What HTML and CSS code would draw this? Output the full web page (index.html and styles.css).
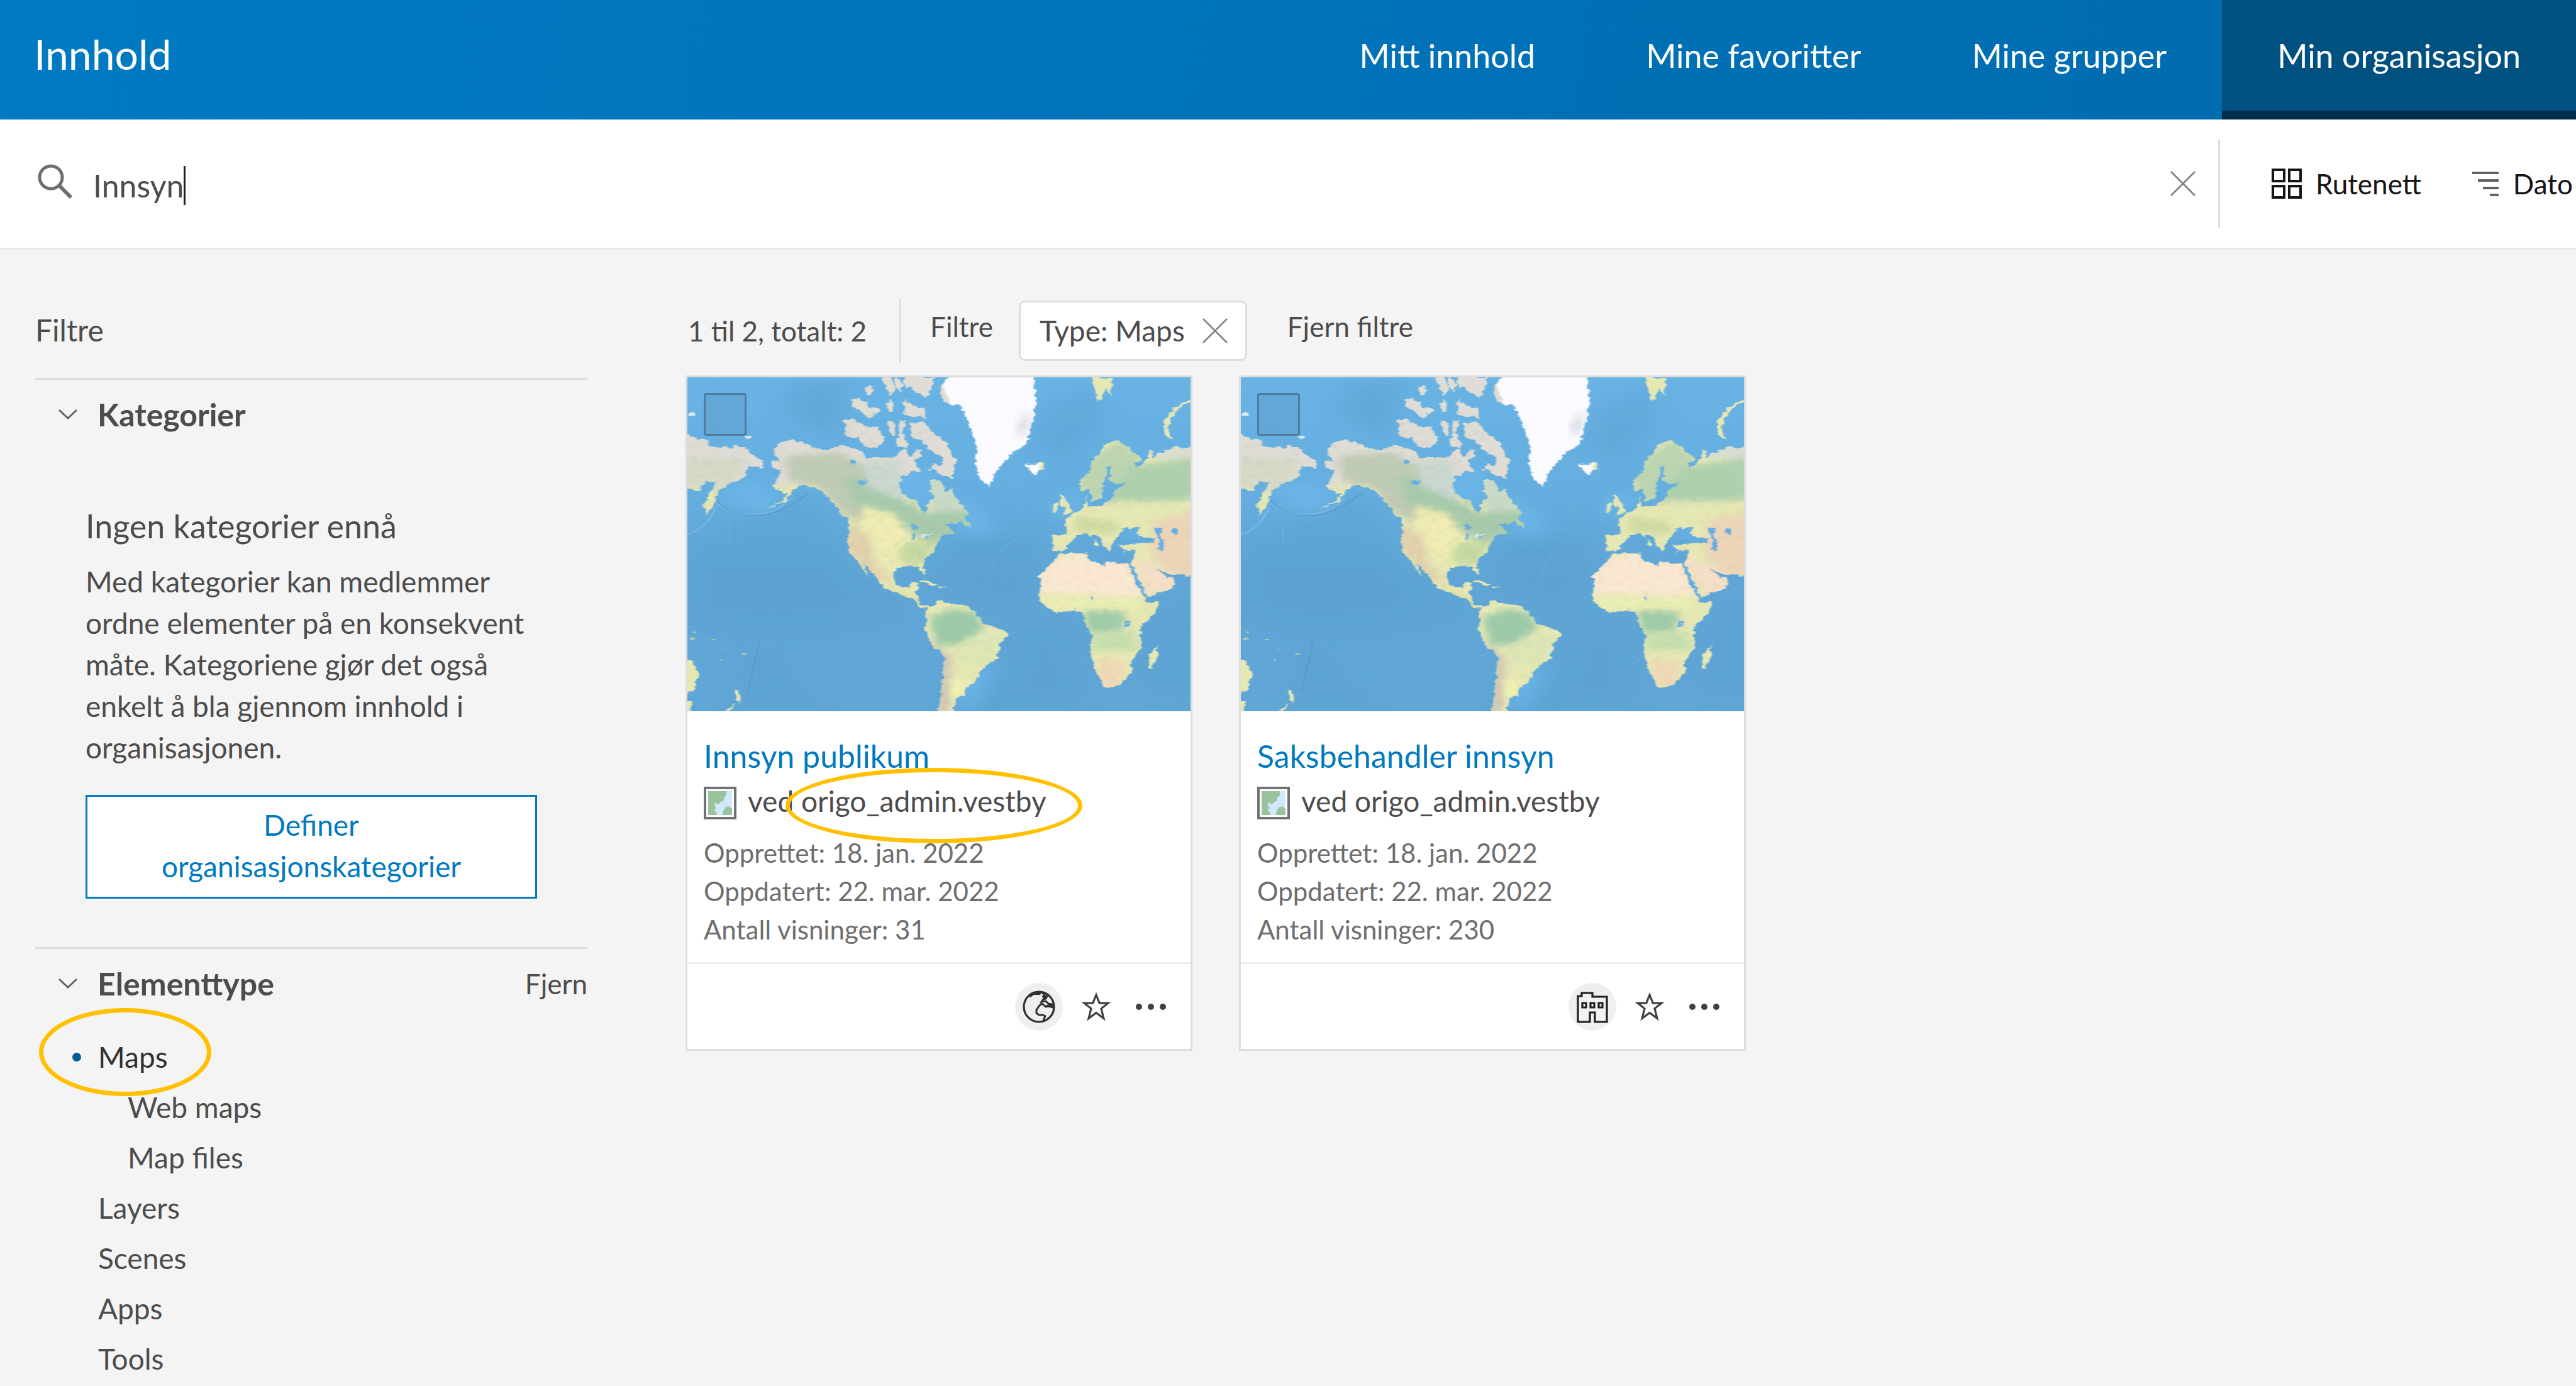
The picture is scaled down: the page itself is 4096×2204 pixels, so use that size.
FILE: index.html
```html
<!DOCTYPE html>
<html lang="no">
<head>
<meta charset="utf-8">
<title>Innhold</title>
<link rel="stylesheet" href="styles.css">
</head>
<body>
<svg class="sprite" aria-hidden="true">
  <defs>
    <linearGradient id="ocean" x1="0" y1="0" x2="0" y2="1">
      <stop offset="0" stop-color="#69b3e5"/>
      <stop offset="0.35" stop-color="#65aedf"/>
      <stop offset="0.6" stop-color="#5fa5d5"/>
      <stop offset="1" stop-color="#60a6d6"/>
    </linearGradient>
    <filter id="soft" x="-20%" y="-20%" width="140%" height="140%"><feGaussianBlur stdDeviation="13"/></filter>
    <filter id="haze" x="-20%" y="-20%" width="140%" height="140%"><feGaussianBlur stdDeviation="32"/></filter>
    <filter id="coast" x="0" y="0" width="100%" height="100%">
      <feTurbulence type="fractalNoise" baseFrequency="0.05" numOctaves="3" seed="4" result="n"/>
      <feDisplacementMap in="SourceGraphic" in2="n" scale="22" xChannelSelector="R" yChannelSelector="G" result="d"/>
      <feGaussianBlur in="d" stdDeviation="1.6"/>
    </filter>
    <filter id="relief" x="0" y="0" width="100%" height="100%">
      <feTurbulence type="fractalNoise" baseFrequency="0.04" numOctaves="4" seed="9"/>
      <feColorMatrix values="0 0 0 0 0.5  0 0 0 0 0.47  0 0 0 0 0.4  1.6 0 0 0 -0.72"/>
    </filter>
    <clipPath id="land">
      <path d="M0 270L22 285 50 310 85 315 92 345 145 345 150 360 160 342 195 345 220 385 250 410 250 445 230 430 205 435 192 485 150 515 125 530 108 560 110 595 80 655 72 600 90 560 110 505 75 500 60 545 0 530Z"/>
      <path d="M280 370L300 330 335 312 400 345 440 360 490 340 550 365 560 395 610 390 650 395 670 360 690 345 690 390 705 385 715 360 732 360 725 390 710 410 718 440 735 465 700 455 690 460 670 490 665 530 680 570 720 600 735 640 748 655 750 600 765 580 755 490 790 500 805 550 822 535 840 590 870 635 862 665 885 710 860 700 855 680 830 690 800 700 815 715 840 740 800 745 775 790 768 820 740 860 735 880 745 925 735 925 722 888 690 885 655 895 645 930 655 975 690 985 700 960 725 965 715 1000 720 1030 730 1065 760 1075 735 1080 700 1035 650 1005 615 985 590 930 550 870 560 900 580 945 565 925 545 880 515 820 505 760 515 690 490 650 450 575 420 540 375 515 340 545 320 590 250 640 300 600 325 560 280 525 290 490 310 455 280 440 275 415 305 415Z"/>
      <path d="M500 220L525 215 550 250 600 260 620 300 600 350 560 345 540 300 515 305 500 280ZM525 125L545 125 580 170 605 180 570 215 545 180 520 160ZM560 70L580 65 580 110 565 110ZM610 30L640 30 650 80 640 110 625 80ZM655 30L675 60 665 90 650 70ZM680 30L770 30 765 80 740 120 715 100 700 70 680 80ZM625 150L640 130 650 180 630 185ZM680 130L710 160 740 170 745 215 710 210 680 200ZM630 230L650 240 650 300 635 280ZM665 225L682 225 675 280 690 340 660 345 650 330 665 290ZM695 235L740 235 765 280 800 320 820 370 838 410 828 440 825 490 790 470 760 450 765 420 790 430 800 405 760 360 730 320 705 300Z"/>
      <path d="M745 1075L760 1075 785 1040 830 1060 860 1065 890 1090 915 1145 985 1180 990 1205 968 1240 960 1310 915 1350 890 1420 865 1440 862 1475 835 1490 825 1560 778 1560 792 1470 800 1300 765 1250 740 1185 745 1140Z"/>
      <path d="M820 10L1072 10 1078 130 1070 230 1050 330 1000 380 960 450 935 525 910 490 893 420 900 350 880 260 850 160 800 145 785 80ZM1050 420L1070 425 1100 415 1102 440 1075 472 1058 450Z"/>
      <path d="M1570 350L1500 345 1450 375 1430 400 1430 365 1422 360 1412 410 1385 440 1375 420 1398 405 1360 350 1325 315 1285 340 1250 410 1240 460 1210 500 1215 550 1240 535 1250 595 1275 575 1283 510 1295 470 1290 440 1308 425 1300 500 1320 515 1360 505 1320 540 1305 590 1280 610 1235 618 1228 568 1222 625 1190 650 1163 690 1172 740 1130 750 1128 810 1150 825 1175 795 1200 745 1235 740 1270 790 1262 800 1245 745 1265 745 1290 815 1305 820 1310 770 1330 750 1340 715 1385 745 1400 755 1440 760 1435 780 1330 790 1345 820 1380 815 1365 870 1395 960 1418 1030 1490 985 1500 945 1470 935 1445 890 1480 925 1570 935Z"/>
      <path d="M1140 850L1150 835 1230 825 1240 860 1285 885 1290 865 1360 880 1375 950 1415 1050 1455 1045 1440 1100 1395 1165 1395 1270 1365 1320 1365 1370 1330 1430 1285 1440 1255 1350 1243 1280 1250 1200 1230 1160 1220 1100 1195 1085 1140 1100 1095 1055 1087 1010 1090 930ZM1445 1245L1448 1290 1432 1355 1418 1350 1422 1290ZM1155 555L1170 590 1188 645 1160 655 1165 625 1150 600ZM1130 610L1145 595 1147 630 1130 645Z"/>
      <path d="M1245 30L1310 30 1305 120 1290 80 1270 145 1255 90ZM1570 125L1515 165 1490 210 1478 260 1490 315 1465 290 1470 220 1500 165 1540 135ZM0 1290L40 1320 58 1380 40 1450 0 1480ZM0 1500L35 1500 30 1546 0 1546ZM165 1440L188 1480 180 1510 168 1480ZM172 1505L150 1546 135 1546ZM735 945L780 975 765 978 730 955ZM785 975L812 985 785 990Z"/>
    </clipPath>
    <symbol id="worldmap" viewBox="22 30 1524 1516" preserveAspectRatio="none">
      <rect x="0" y="0" width="1570" height="1570" fill="url(#ocean)"/>
      <g filter="url(#haze)" fill="#5a9fcf">
        <path d="M340 60L520 40 480 280 400 270 330 200Z" opacity="0.45"/>
        <path d="M1100 180L1260 60 1280 250 1160 420 1080 340Z" opacity="0.35"/>
        <path d="M22 780L200 680 400 560 520 900 640 1080 500 1150 240 1180 22 1120Z" opacity="0.4"/>
        <path d="M800 800L1080 740 1060 1000 960 1060 830 950Z" opacity="0.5"/>
        <path d="M1000 1120L1200 1200 1220 1500 900 1560 1020 1300Z" opacity="0.4"/>
        <path d="M1420 1200L1560 1080 1560 1500 1420 1450Z" opacity="0.4"/>
        <path d="M230 1250L420 1540 180 1560Z" opacity="0.4"/>
      </g>
      <g filter="url(#haze)" fill="#6cb6e8">
        <path d="M110 520L280 520 300 620 200 640Z"/>
        <path d="M650 440L760 440 760 640 680 600Z"/>
        <path d="M830 560L900 620 960 700 900 760 840 700Z"/>
        <path d="M1200 560L1240 600 1160 680 1110 600Z"/>
        <path d="M880 1360L960 1340 880 1540 830 1540Z"/>
      </g>
      <g fill="none" stroke="#8cc3e6" stroke-width="5" opacity="0.6">
        <path d="M110 600C150 650 200 660 250 648S310 610 340 575"/>
        <path d="M22 745C60 725 90 680 108 620"/>
        <path d="M148 690L150 780M930 940C950 860 960 820 1020 760M700 1340L770 1280M1160 1380L1240 1300" stroke-width="3" opacity="0.5"/>
      </g>
      <path d="M240 1230C225 1330 215 1400 205 1460M110 590C150 655 230 680 300 635S360 580 390 555" fill="none" stroke="#5595c2" stroke-width="5" opacity="0.6"/>
      <g filter="url(#coast)">
        <g clip-path="url(#land)">
          <rect x="0" y="0" width="1570" height="1570" fill="#e6e8b4"/>
          <g filter="url(#soft)">
            <rect x="0" y="0" width="880" height="520" fill="#dfddd6"/>
            <path d="M0 390L200 410 160 560 0 520Z" fill="#d6dac6"/>
            <path d="M320 390L480 370 570 440 580 700 500 660 420 530 330 500Z" fill="#bfcbb4"/>
            <path d="M500 480L580 490 660 550 740 650 880 620 880 740 760 780 690 730 620 640 530 620Z" fill="#a6cbaa"/>
            <path d="M560 410L660 400 690 600 560 520Z" fill="#cbd9d0"/>
            <path d="M750 480L830 520 860 640 760 640Z" fill="#c8dac8"/>
            <path d="M552 610L650 650 700 760 740 780 640 900 590 800 550 700Z" fill="#f0edb2"/>
            <path d="M500 700L570 740 590 880 640 960 590 950 500 800Z" fill="#e3d2ab"/>
            <path d="M670 780L780 770 740 880 660 870Z" fill="#c6dba2"/>
            <path d="M600 930L650 990 720 1050 740 1080 690 1050Z" fill="#d5d596"/>
            <path d="M755 1120L830 1080 900 1100 920 1180 880 1240 780 1250Z" fill="#9dcba9"/>
            <path d="M910 1180L990 1190 950 1330 850 1340 830 1260Z" fill="#dde7b6"/>
            <path d="M740 1180L780 1260 820 1300 810 1560 780 1560 790 1320Z" fill="#cdbfb6"/>
            <path d="M825 1380L870 1440 840 1490 815 1470Z" fill="#f3f3b0"/>
            <path d="M1210 440L1330 310 1400 400 1320 600 1210 590Z" fill="#bdd4b0"/>
            <path d="M1360 440L1570 390 1570 580 1480 590 1300 590 1310 520Z" fill="#aed0ac"/>
            <path d="M1430 330L1570 330 1570 400 1430 400Z" fill="#d9ddd0"/>
            <path d="M1200 660L1320 690 1330 740 1200 730Z" fill="#cfdba0"/>
            <path d="M1440 680L1570 630 1570 940 1480 930 1420 800Z" fill="#ecd5b8"/>
            <path d="M1360 830L1500 930 1490 1000 1420 1020Z" fill="#f6dfc8"/>
            <path d="M1080 860L1240 820 1360 870 1400 1020 1080 1010Z" fill="#fae8d2"/>
            <path d="M1080 1030L1380 1030 1400 1080 1100 1080Z" fill="#ecefb4"/>
            <path d="M1220 1090L1350 1090 1340 1180 1240 1190Z" fill="#9fcca8"/>
            <path d="M1245 1200L1380 1180 1380 1270 1250 1270Z" fill="#c6dfae"/>
            <path d="M1260 1310L1350 1320 1330 1450 1270 1430Z" fill="#f0d9b6"/>
          </g>
          <path d="M780 0H1090V540H900L880 400Z" fill="#fafaff"/>
          <path d="M1060 170L1050 260 1030 310 1020 250Z" fill="#c9ccd4" opacity="0.7" filter="url(#soft)"/>
          <rect x="0" y="200" width="780" height="800" filter="url(#relief)" opacity="0.3"/>
          <rect x="700" y="560" width="870" height="1010" filter="url(#relief)" opacity="0.2"/>
        </g>
        <g fill="#66aee0">
          <path d="M1345 712L1362 720 1390 708 1380 735 1402 755 1390 772 1360 765 1335 765Z"/>
          <path d="M1435 715L1462 712 1452 745 1468 790 1462 820 1448 812 1450 775Z"/>
          <path d="M1494 718L1508 715 1508 745 1494 745ZM515 405L535 405 530 430 515 425ZM540 500L565 500 560 515 545 515ZM1350 1135L1362 1135 1360 1160 1350 1158ZM1248 1022L1256 1022 1255 1034 1248 1034Z"/>
          <path d="M695 700L715 700 725 715 705 720ZM705 735L712 735 712 765 704 765ZM735 745L765 750 745 762Z"/>
          <path d="M1360 895L1372 900 1415 1020 1408 1028 1380 960Z"/>
        </g>
        <path d="M730 745L765 740 760 750 735 755Z" fill="#dcebf2"/>
        <g fill="#dcebf0"><circle cx="36" cy="196" r="9"/><circle cx="206" cy="302" r="9"/></g>
        <g fill="#b9d3a2"><circle cx="35" cy="1218" r="6"/><circle cx="45" cy="1186" r="5"/><circle cx="100" cy="1222" r="4"/><circle cx="133" cy="1266" r="4"/><circle cx="195" cy="1284" r="5"/><circle cx="126" cy="1315" r="4"/></g>
      </g>
    </symbol>
    <symbol id="i-star" viewBox="0 0 48 48"><path d="M24 5L29.200 18.200H43L32 26.800 36 42.500 24 33.500 12 42.500 16 26.800 5 18.200H18.800Z" fill="none" stroke="#404040" stroke-width="3.200"/></symbol>
    <symbol id="i-dots" viewBox="0 0 50 48"><g fill="#404040"><circle cx="6" cy="24" r="5"/><circle cx="25" cy="24" r="5"/><circle cx="44" cy="24" r="5"/></g></symbol>
    <symbol id="i-x" viewBox="0 0 40 40"><path d="M1 1L39 39M39 1L1 39" fill="none" stroke="#808080" stroke-width="2.600"/></symbol>
    <symbol id="i-chevron" viewBox="0 0 30 18"><path d="M1 2L15 15 29 2" fill="none" stroke="#606060" stroke-width="3"/></symbol>
    <symbol id="i-webmap" viewBox="0 0 52 52">
      <rect x="2" y="2" width="48" height="48" fill="#fff" stroke="#727276" stroke-width="4"/>
      <rect x="7" y="7" width="38" height="38" fill="#d0e8fa"/>
      <path d="M7 7H36V14L32 17V22L27 24 25 27 20 28V25L17 26V30L20 34 16 36 20 41 21 45H7Z" fill="#99c39c"/>
      <path d="M30 45V41L34 33 40 31 43 34 45 35V45Z" fill="#99c39c"/>
    </symbol>
  </defs>
</svg>

<header class="topbar">
  <h1 class="topbar-title">Innhold</h1>
  <nav class="tabs">
    <a class="tab" href="#mine">Mitt innhold</a>
    <a class="tab" href="#favoritter">Mine favoritter</a>
    <a class="tab" href="#grupper">Mine grupper</a>
    <a class="tab tab-active" href="#organisasjon" aria-current="page">Min organisasjon</a>
  </nav>
</header>

<div class="searchbar">
  <label class="search">
    <svg class="search-icon" viewBox="0 0 56 56" role="img" aria-label="Søk"><circle cx="21" cy="21" r="18" fill="none" stroke="#6e6e6e" stroke-width="5"/><path d="M34 34L53 53" stroke="#6e6e6e" stroke-width="6"/></svg>
    <input class="search-input" type="text" value="Innsyn">
    <span class="caret"></span>
  </label>
  <button class="icon-button clear" type="button" aria-label="Tøm"><svg class="x-icon"><use href="#i-x"/></svg></button>
  <div class="view-tools">
    <button class="tool" type="button"><svg class="tool-icon" viewBox="0 0 48 48"><path d="M2 2H20V20H2ZM28 2H46V20H28ZM2 28H20V46H2ZM28 28H46V46H28Z" fill="none" stroke="#151515" stroke-width="4"/></svg>Rutenett</button>
    <button class="tool" type="button"><svg class="sort-icon" viewBox="0 0 44 42"><path d="M1 4H43M10 16H43M18 28H43M29 39H43" fill="none" stroke="#606060" stroke-width="4"/></svg>Dato</button>
  </div>
</div>

<main class="page">
  <aside class="sidebar">
    <h2 class="sidebar-title">Filtre</h2>
    <section class="group">
      <div class="group-head"><svg class="chevron"><use href="#i-chevron"/></svg><h3 class="group-title">Kategorier</h3></div>
      <div class="empty">
        <h4 class="empty-title">Ingen kategorier ennå</h4>
        <p class="empty-text">Med kategorier kan medlemmer<br>ordne elementer på en konsekvent<br>måte. Kategoriene gjør det også<br>enkelt å bla gjennom innhold i<br>organisasjonen.</p>
        <button class="outline-button" type="button">Definer<br>organisasjonskategorier</button>
      </div>
    </section>
    <section class="group">
      <div class="group-head"><svg class="chevron"><use href="#i-chevron"/></svg><h3 class="group-title">Elementtype</h3><a class="remove" href="#fjern">Fjern</a></div>
      <ul class="types">
        <li class="type type-active"><a href="#maps">Maps</a><span class="ring ring-type"></span></li>
        <li class="type type-sub"><a href="#webmaps">Web maps</a></li>
        <li class="type type-sub"><a href="#mapfiles">Map files</a></li>
        <li class="type"><a href="#layers">Layers</a></li>
        <li class="type"><a href="#scenes">Scenes</a></li>
        <li class="type"><a href="#apps">Apps</a></li>
        <li class="type"><a href="#tools">Tools</a></li>
      </ul>
    </section>
  </aside>

  <section class="results">
    <div class="summary">
      <span class="count">1 til 2, totalt: 2</span>
      <span class="summary-label">Filtre</span>
      <button class="chip" type="button">Type: Maps<svg class="x-icon"><use href="#i-x"/></svg></button>
      <a class="clear-filters" href="#fjern-filtre">Fjern filtre</a>
    </div>
    <div class="cards">
      <article class="card">
        <div class="thumb"><svg class="thumb-map"><use href="#worldmap"/></svg><input class="pick" type="checkbox" aria-label="Velg Innsyn publikum"></div>
        <div class="card-body">
          <h3 class="card-title"><a href="#innsyn-publikum">Innsyn publikum</a></h3>
          <p class="owner"><svg class="owner-icon"><use href="#i-webmap"/></svg>ved origo_admin.vestby<span class="ring ring-owner"></span></p>
          <p class="meta">Opprettet: 18. jan. 2022</p>
          <p class="meta">Oppdatert: 22. mar. 2022</p>
          <p class="meta">Antall visninger: 31</p>
        </div>
        <footer class="card-foot">
          <span class="share"><svg class="share-icon" viewBox="0 0 52 52"><circle cx="26" cy="26" r="24" fill="none" stroke="#303030" stroke-width="3.200"/><path d="M12 8L20 3 31 3 28 7 18 7 11 12Z" fill="#303030"/><path d="M31 4L35 6 33 9 39 9 37 13 33 14 30 18 37 17 41 21 47 22 48 27 42 25 37 26 32 22 30 21 26 25 22 31 22 36 26 39 32 39 36 41 34 45 33 49" fill="none" stroke="#303030" stroke-width="3"/><path d="M32 6L39 9 37 14 32 13ZM37 23L46 22 48 26 40 27Z" fill="#303030"/></svg></span>
          <button class="icon-button foot-button" type="button" aria-label="Favoritt"><svg class="foot-icon"><use href="#i-star"/></svg></button>
          <button class="icon-button foot-button" type="button" aria-label="Mer"><svg class="foot-icon"><use href="#i-dots"/></svg></button>
        </footer>
      </article>
      <article class="card">
        <div class="thumb"><svg class="thumb-map"><use href="#worldmap"/></svg><input class="pick" type="checkbox" aria-label="Velg Saksbehandler innsyn"></div>
        <div class="card-body">
          <h3 class="card-title"><a href="#saksbehandler-innsyn">Saksbehandler innsyn</a></h3>
          <p class="owner"><svg class="owner-icon"><use href="#i-webmap"/></svg>ved origo_admin.vestby</p>
          <p class="meta">Opprettet: 18. jan. 2022</p>
          <p class="meta">Oppdatert: 22. mar. 2022</p>
          <p class="meta">Antall visninger: 230</p>
        </div>
        <footer class="card-foot">
          <span class="share"><svg class="share-icon" viewBox="0 0 52 52"><path d="M3 50V9H9V4H26V10H49V50H30V35H22V50Z" fill="#f3f3f3" stroke="#202020" stroke-width="3.200"/><path d="M10 20H16V27H10ZM23 20H29V27H23ZM36 20H42V27H36Z" fill="none" stroke="#202020" stroke-width="3.200"/></svg></span>
          <button class="icon-button foot-button" type="button" aria-label="Favoritt"><svg class="foot-icon"><use href="#i-star"/></svg></button>
          <button class="icon-button foot-button" type="button" aria-label="Mer"><svg class="foot-icon"><use href="#i-dots"/></svg></button>
        </footer>
      </article>
    </div>
  </section>
</main>
</body>
</html>
```
FILE: styles.css
```css
* { box-sizing: border-box; margin: 0; padding: 0; }

body {
  min-height: 100vh;
  overflow-x: hidden;
  background: #f4f4f4;
  color: #4c4c4c;
  font-family: Lato, "Open Sans", sans-serif;
  font-size: 46px;
  line-height: 66px;
}

a { color: inherit; text-decoration: none; }
button, input { font: inherit; color: inherit; border: 0; background: none; border-radius: 0; }
ul { list-style: none; }
svg { display: block; flex: none; }
.sprite { position: absolute; width: 0; height: 0; }

.topbar {
  display: flex;
  justify-content: space-between;
  height: 190px;
  padding-left: 54px;
  background: linear-gradient(100deg, #007ac2, #0074ba 40%, #006aae);
  color: #fff;
}
.topbar-title { font-size: 66px; font-weight: 400; line-height: 172px; }
.tabs { display: flex; font-size: 52px; line-height: 176px; white-space: nowrap; }
.tab { padding: 0 88px; }
.tab-active { background: #005080; border-bottom: 14px solid #002d4a; }

.searchbar {
  display: flex;
  align-items: center;
  height: 207px;
  overflow: hidden;
  background: #fff;
  border-bottom: 3px solid #e6e6e6;
}
.search { display: flex; flex: 1; align-items: center; padding-left: 60px; }
.search-icon { width: 56px; height: 56px; margin-bottom: 6px; }
.search-input { field-sizing: content; margin: 6px 0 0 32px; font-size: 50px; outline: 0; }
.caret { width: 3px; height: 62px; margin-top: 6px; background: #202020; }
.icon-button { display: flex; align-items: center; justify-content: center; }
.clear { width: 76px; height: 76px; margin-right: 18px; }
.x-icon { width: 40px; height: 40px; }
.view-tools {
  display: flex;
  gap: 80px;
  flex: 0 0 569px;
  height: 140px;
  padding-left: 82px;
  border-left: 3px solid #dcdcdc;
  color: #151515;
  font-size: 44px;
  overflow: hidden;
}
.tool { display: flex; flex: none; align-items: center; gap: 22px; }
.tool-icon { width: 48px; height: 48px; }
.sort-icon { width: 44px; height: 42px; }

.page {
  display: grid;
  grid-template-columns: 878px 1fr;
  column-gap: 156px;
  padding: 78px 56px 0;
}

.sidebar-title { padding: 17px 0 43px; font-size: 48px; font-weight: 400; }
.group { border-top: 3px solid #dedede; padding-top: 22px; }
.group-head { display: flex; align-items: center; padding-left: 37px; }
.chevron { width: 30px; height: 18px; margin-right: 32px; }
.group-title { font-size: 50px; font-weight: 700; }
.remove { margin-left: auto; font-size: 44px; }
.empty { padding: 111px 80px 77px; }
.empty-title { margin-bottom: 23px; font-size: 52px; font-weight: 400; }
.empty-text { margin-bottom: 42px; white-space: nowrap; }
.outline-button {
  width: 100%;
  padding: 12px 0 15px;
  background: #fff;
  border: 3px solid #0079c1;
  color: #0079c1;
}
.types { padding-top: 44px; line-height: 80px; }
.type { padding-left: 100px; }
.type-sub { padding-left: 147px; }
.type-active { position: relative; display: flex; align-items: center; padding-left: 59px; color: #303030; }
.type-active::before { content: ""; width: 14px; height: 14px; margin-right: 27px; border-radius: 50%; background: #005e95; }
.ring { position: absolute; border: 7px solid #ffc000; border-radius: 50%; pointer-events: none; }
.ring-type { left: 6px; top: -38px; width: 274px; height: 140px; }

.summary { display: flex; align-items: center; height: 102px; margin-bottom: 20px; font-size: 44px; white-space: nowrap; }
.count { padding: 18px 52px 18px 4px; border-right: 3px solid #dcdcdc; }
.summary-label { padding: 0 41px 14px 46px; }
.chip {
  display: flex;
  align-items: center;
  gap: 28px;
  height: 96px;
  padding: 0 28px 0 30px;
  background: #fff;
  border: 3px solid #dedede;
  border-radius: 10px;
  font-size: 46px;
}
.clear-filters { padding: 0 0 14px 64px; }

.cards { display: grid; grid-template-columns: repeat(auto-fill, 806px); gap: 74px; }
.card { background: #fff; border: 3px solid #dedede; }
.thumb { position: relative; }
.thumb-map { width: 100%; height: 531px; }
.pick {
  position: absolute;
  left: 26px;
  top: 25px;
  width: 68px;
  height: 68px;
  appearance: none;
  border: 3px solid rgba(60, 80, 100, 0.5);
  border-radius: 4px;
  background: rgba(80, 130, 170, 0.2);
}
.card-body { padding: 38px 26px 21px; }
.card-title { font-size: 50px; font-weight: 400; color: #0079c1; }
.owner { position: relative; display: flex; align-items: center; gap: 18px; margin: 6px 0 19px; }
.owner-icon { width: 52px; height: 52px; margin-top: 6px; }
.ring-owner { left: 130px; top: -20px; width: 472px; height: 120px; }
.meta { font-size: 42px; line-height: 61px; color: #6e6e6e; }
.card-foot {
  display: flex;
  align-items: center;
  justify-content: flex-end;
  gap: 18px;
  height: 138px;
  padding-right: 29px;
  border-top: 3px solid #efefef;
}
.share { display: flex; align-items: center; justify-content: center; width: 76px; height: 76px; border-radius: 50%; background: #efefef; }
.share-icon { width: 52px; height: 52px; }
.foot-button { width: 69px; height: 76px; }
.foot-icon { width: 50px; height: 48px; }
```
